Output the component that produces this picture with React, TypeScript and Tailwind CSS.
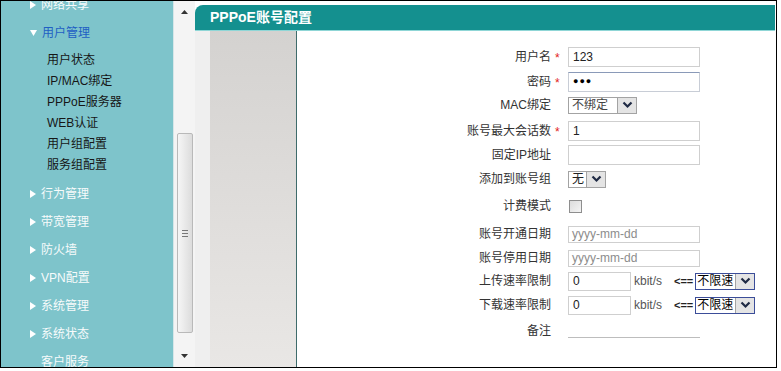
import React from 'react';

const topMenus = ['行为管理', '带宽管理', '防火墙', 'VPN配置', '系统管理', '系统状态', '客户服务'];
const subMenus = ['用户状态', 'IP/MAC绑定', 'PPPoE服务器', 'WEB认证', '用户组配置', '服务组配置'];

const RightArrow = () => (
  <svg width="6" height="8" viewBox="0 0 6 8" className="shrink-0">
    <polygon points="0,0 6,4 0,8" fill="#ffffff" />
  </svg>
);

const Chevron = () => (
  <svg width="11" height="8" viewBox="0 0 11 8">
    <polyline points="1.5,1.5 5.5,5.5 9.5,1.5" fill="none" stroke="#1f2a44" strokeWidth="2.2" />
  </svg>
);

const TopItem = ({ label, last }: { label: string; last?: boolean }) => (
  <div className="h-[28px] flex items-center pl-[29px] text-[#f7fbfb] whitespace-nowrap">
    {!last && <RightArrow />}
    <span className={last ? 'ml-[11px]' : 'ml-[5px]'}>{label}</span>
  </div>
);

const Label = ({ text, req }: { text: string; req?: boolean }) => (
  <>
    <div className="w-[254px] text-right text-[12px] text-[#333]">{text}</div>
    <div className="w-[17px] pl-[4px] text-[12px] text-[#e2231a] leading-none pt-[2px]">{req ? '*' : ''}</div>
  </>
);

const SpeedRow = ({ label }: { label: string }) => (
  <>
    <Label text={label} />
    <div className="w-[63px] h-[19px] border border-[#cfcfcf] pl-[4px] flex items-center text-[12px] text-[#222]">0</div>
    <span className="ml-[3px] text-[12px] text-[#555]">kbit/s</span>
    <span className="ml-[12px] text-[11px] font-bold text-[#222]">&lt;==</span>
    <div className="ml-[2px] w-[60px] h-[17px] border border-[#3b4d99] flex">
      <div className="flex-1 pl-[1px] text-[12px] text-black leading-[15px] whitespace-nowrap overflow-hidden">不限速</div>
      <div className="w-[19px] border-l border-[#a3a3a3] bg-[#e4e4e4] flex items-center justify-center"><Chevron /></div>
    </div>
  </>
);

const App = () => {
  return (
    <div className="w-[781px] h-[371px] bg-white font-['Liberation_Sans','Noto_Sans_CJK_SC',sans-serif]">
      <div className="w-[777px] h-[368px] border border-black flex overflow-hidden">
        {/* sidebar menu */}
        <div className="w-[172px] bg-[#7ec4cb] overflow-hidden text-[12px]">
          <div className="-mt-[10px]">
            <TopItem label="网络共享" />
            <div className="h-[28px] flex items-center pl-[29px]">
              <svg width="7" height="6" viewBox="0 0 7 6" className="shrink-0">
                <polygon points="0,0 7,0 3.5,6" fill="#ffffff" />
              </svg>
              <span className="ml-[5px] text-[#1f5fc4]">用户管理</span>
            </div>
            <div className="mt-[2px]">
              {subMenus.map(s => (
                <div key={s} className="h-[21px] flex items-center pl-[46px] text-[#161616]">{s}</div>
              ))}
            </div>
            <div className="mt-[5px]">
              {topMenus.map((m, i) => <TopItem key={m} label={m} last={i === topMenus.length - 1} />)}
            </div>
          </div>
        </div>

        {/* scrollbar */}
        <div className="w-[22px] bg-[#f4f4f4] border-l border-[#d6e6e8] flex flex-col items-center">
          <div className="h-[22px] flex items-center justify-center">
            <svg width="7" height="4" viewBox="0 0 7 4"><polygon points="0,4 3.5,0 7,4" fill="#333" /></svg>
          </div>
          <div className="h-[110px]" />
          <div className="w-[16px] h-[200px] rounded-[2px] border border-[#b9b9b9] bg-gradient-to-r from-[#f6f6f6] to-[#dcdcdc] flex items-center justify-center">
            <div className="flex flex-col gap-[2px]">
              <div className="w-[6px] h-px bg-[#777]" />
              <div className="w-[6px] h-px bg-[#777]" />
              <div className="w-[6px] h-px bg-[#777]" />
            </div>
          </div>
          <div className="flex-1" />
          <div className="h-[22px] flex items-center justify-center">
            <svg width="7" height="4" viewBox="0 0 7 4"><polygon points="0,0 7,0 3.5,4" fill="#333" /></svg>
          </div>
        </div>

        {/* main */}
        <div className="flex-1 flex flex-col pt-[4px]">
          <div className="h-[26px] mr-[1px] rounded-tl-[8px] bg-[#14908f] border-b border-[#8fd6d6] flex items-center pl-[15px] text-white font-bold text-[14px]">
            PPPoE账号配置
          </div>
          <div className="flex-1 flex">
            <div className="w-[15px] bg-[#efefef]" />
            <div className="w-[86px] bg-gradient-to-b from-[#d4d2d0] to-[#e9e7e5]" />
            <div className="w-px bg-[#3e6b6b]" />
            <div className="flex-1 bg-white pt-[15px]">
              <div className="h-[22px] flex items-center">
                <Label text="用户名" req />
                <div className="w-[132px] h-[20px] border border-[#cfcfcf] pl-[4px] flex items-center text-[12px] text-[#222]">123</div>
              </div>
              <div className="h-[22px] flex items-center mt-[3px]">
                <Label text="密码" req />
                <div className="w-[132px] h-[20px] border border-[#c8cdd6] border-t-[#8a9ab8] pl-[4px] flex items-center text-[9px] tracking-[1px] text-black">●●●</div>
              </div>
              <div className="h-[22px] flex items-center mt-[1px]">
                <Label text="MAC绑定" />
                <div className="w-[69px] h-[17px] border border-[#a3a3a3] flex">
                  <div className="flex-1 pl-[3px] text-[12px] text-[#444] leading-[15px]">不绑定</div>
                  <div className="w-[19px] border-l border-[#a3a3a3] bg-[#e4e4e4] flex items-center justify-center"><Chevron /></div>
                </div>
              </div>
              <div className="h-[22px] flex items-center mt-[4px]">
                <Label text="账号最大会话数" req />
                <div className="w-[132px] h-[20px] border border-[#cfcfcf] pl-[4px] flex items-center text-[12px] text-[#222]">1</div>
              </div>
              <div className="h-[22px] flex items-center mt-[2px]">
                <Label text="固定IP地址" />
                <div className="w-[132px] h-[20px] border border-[#cfcfcf]" />
              </div>
              <div className="h-[22px] flex items-center mt-[2px]">
                <Label text="添加到账号组" />
                <div className="w-[38px] h-[17px] border border-[#a3a3a3] flex">
                  <div className="flex-1 pl-[3px] text-[12px] text-[#222] leading-[15px]">无</div>
                  <div className="w-[19px] border-l border-[#a3a3a3] bg-[#e4e4e4] flex items-center justify-center"><Chevron /></div>
                </div>
              </div>
              <div className="h-[22px] flex items-center mt-[5px]">
                <Label text="计费模式" />
                <div className="ml-[1px] w-[13px] h-[13px] border border-[#8e8e8e] bg-gradient-to-br from-[#dcdcdc] to-[#f4f4f4]" />
              </div>
              <div className="h-[22px] flex items-center mt-[6px]">
                <Label text="账号开通日期" />
                <div className="w-[132px] h-[17px] border border-[#cfcfcf] pl-[3px] flex items-center text-[12px] text-[#8c8c8c]">yyyy-mm-dd</div>
              </div>
              <div className="h-[22px] flex items-center mt-[2px]">
                <Label text="账号停用日期" />
                <div className="w-[132px] h-[17px] border border-[#cfcfcf] pl-[3px] flex items-center text-[12px] text-[#8c8c8c]">yyyy-mm-dd</div>
              </div>
              <div className="h-[22px] flex items-center mt-[1px]">
                <SpeedRow label="上传速率限制" />
              </div>
              <div className="h-[22px] flex items-center mt-[2px]">
                <SpeedRow label="下载速率限制" />
              </div>
              <div className="h-[22px] flex items-center mt-[4px]">
                <Label text="备注" />
                <div className="w-[132px] h-[13px] border-b border-[#bdbdbd]" />
              </div>
            </div>
          </div>
        </div>
      </div>
    </div>
  );
};

export default App;
